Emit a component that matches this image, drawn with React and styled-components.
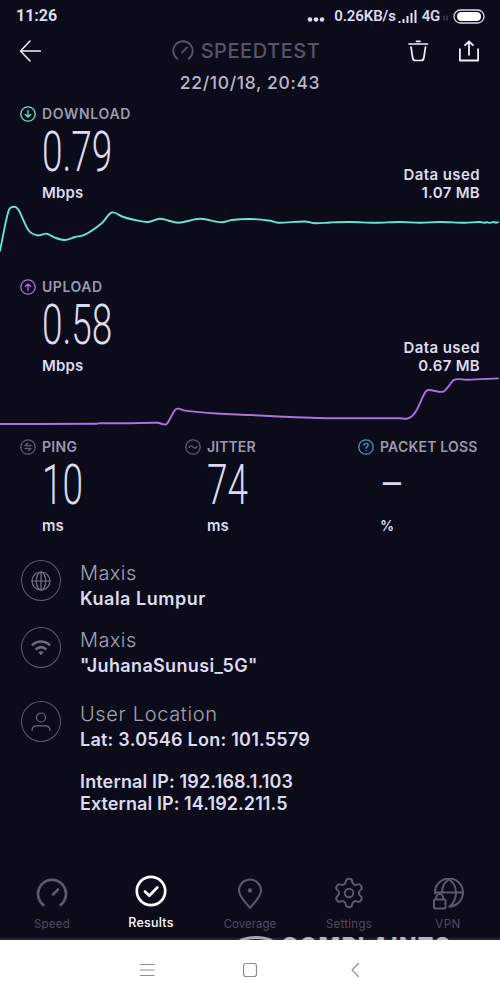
import React from "react";
import styled, { createGlobalStyle, css } from "styled-components";
import { Settings } from "lucide-react";

const INK = "#dddbf0";
const LABEL = "#9b9aab";
const DIM = "#4e4d5e";
const RING = "#5e5d6e";
const TEAL = "#6be3d3";
const VIOLET = "#a973e0";

const Global = createGlobalStyle`
  *, *::before, *::after { box-sizing: border-box; }
  body { margin: 0; background: #0c0b1a; }
`;

const Screen = styled.div`
  position: relative;
  display: flex;
  flex-direction: column;
  width: 500px;
  height: 1000px;
  overflow: hidden;
  background: #0c0b1a;
  color: ${INK};
  font-family: Inter, "Open Sans", sans-serif;
`;

const Text = styled.span`
  display: inline-block;
  white-space: pre;
  font-size: ${(p) => p.$size || 15}px;
  font-weight: ${(p) => p.$weight || 500};
  letter-spacing: ${(p) => p.$track || 0}px;
  line-height: ${(p) => p.$line || 18}px;
  color: ${(p) => p.$color || INK};
  ${(p) => p.$roboto && css`font-family: Roboto, sans-serif;`}
`;

const StatusBar = styled.div`
  display: flex;
  align-items: center;
  height: 32px;
  padding: 0 16px;
`;
const StatusRight = styled.div`
  display: flex;
  align-items: center;
  margin-left: auto;
`;
const Network = styled.div`
  display: flex;
  align-items: center;
  gap: ${(p) => p.$gap}px;
  margin-right: ${(p) => p.$after}px;
`;
const Header = styled.header`
  display: grid;
  grid-template-columns: 100px 1fr 100px;
  align-items: center;
  height: 38px;
  padding: 0 20px 0 19px;
`;
const Brand = styled.div`
  display: flex;
  align-items: center;
  justify-content: center;
  gap: 7px;
  padding-right: 7px;
`;
const Actions = styled.div`
  display: flex;
  justify-content: flex-end;
  gap: 29px;
`;
const DateRow = styled.div`
  height: 31px;
  padding-top: 3px;
  text-align: center;
`;
const Result = styled.section`
  display: flex;
  flex-direction: column;
  height: ${(p) => p.$height}px;
`;
const LabelRow = styled.div`
  display: flex;
  align-items: center;
  gap: 6px;
  height: 26px;
`;
const Reading = styled.div`
  display: flex;
  justify-content: space-between;
  align-items: flex-end;
  height: 75px;
  padding-right: 20px;
`;
const Measure = styled.div`
  display: flex;
  flex-direction: column;
  align-items: flex-start;
  height: 75px;
  padding-left: 22px;
`;
const Value = styled.span`
  display: inline-block;
  height: 57px;
  font-family: Roboto, sans-serif;
  font-weight: 300;
  font-size: 56px;
  line-height: 50px;
  white-space: pre;
  transform: scaleX(0.66);
  transform-origin: left;
`;
const Used = styled.div`
  display: flex;
  flex-direction: column;
  align-items: flex-end;
`;
const Padded = styled.div`
  padding-left: 20px;
`;
const Metrics = styled.section`
  display: grid;
  grid-template-columns: 165px 173px 1fr;
  height: 122px;
  padding-left: 20px;
`;
const InfoList = styled.section`
  display: flex;
  flex-direction: column;
  flex: 1;
  padding: 4px 20px 0 21px;
`;
const InfoRow = styled.div`
  display: flex;
  flex: none;
  gap: 19px;
  height: ${(p) => p.$height}px;
`;
const Ring = styled.div`
  display: flex;
  flex: none;
  align-items: center;
  justify-content: center;
  width: 40px;
  height: 41px;
  border: 1px solid ${RING};
  border-radius: 50%;
`;
const Lines = styled.div`
  display: flex;
  flex-direction: column;
  align-items: flex-start;
`;
const Detail = styled(Text)`
  margin-top: 2px;
`;
const Addresses = styled(Lines)`
  margin-top: 20px;
`;
const Tabs = styled.nav`
  display: flex;
  height: 72px;
  padding: 0 2.5px;
  border-bottom: 2px solid #24222f;
`;
const Tab = styled.div`
  display: flex;
  flex-direction: column;
  align-items: center;
  justify-content: space-between;
  width: 99px;
  height: 64px;
  padding-top: ${(p) => (p.$active ? 7 : 10)}px;
  padding-bottom: ${(p) => (p.$active ? 2 : 0)}px;
  color: ${(p) => (p.$active ? "#fff" : "#5b5a6b")};
`;
const SystemNav = styled.div`
  display: flex;
  align-items: center;
  height: 60px;
  padding-left: 139px;
  background: #fff;
`;
const NavKey = styled.div`
  display: flex;
  margin-right: ${(p) => p.$after || 0}px;
`;
const Watermark = styled.div`
  position: absolute;
  left: 234px;
  top: 935px;
  display: flex;
  align-items: flex-start;
  gap: 3px;
  width: 224px;
  height: 5px;
  overflow: hidden;
`;

const Svg = ({ w, h = w, color = "currentColor", sw = 1.5, cap = "round", children }) => (
  <svg width={w} height={h} viewBox={`0 0 ${w} ${h}`} fill="none" stroke={color} strokeWidth={sw}
    strokeLinecap={cap} strokeLinejoin="round" display="block">
    {children}
  </svg>
);

const smooth = (pts) => {
  let d = `M${pts[0][0]} ${pts[0][1]}`;
  for (let i = 0; i < pts.length - 1; i++) {
    const a = pts[i - 1] || pts[i], b = pts[i], c = pts[i + 1], e = pts[i + 2] || c;
    const t = (c[0] - b[0]) / 3;
    const s1 = (c[1] - a[1]) / (c[0] - a[0]);
    const s2 = (e[1] - b[1]) / (e[0] - b[0]);
    d += ` C${b[0] + t} ${b[1] + s1 * t} ${c[0] - t} ${c[1] - s2 * t} ${c[0]} ${c[1]}`;
  }
  return d;
};

const DOWN = [[0, 48.7], [8.3, 9.7], [13.3, 4.9], [18.3, 7.6], [28.3, 28], [37.3, 33.3], [46.7, 31.7], [55, 35.7], [65, 38], [75, 35], [85, 32.7], [101.7, 21.3], [111.7, 10.5], [123.3, 15], [135, 18], [148.3, 20], [160, 16.8], [178.3, 20.7], [200, 16.8], [221.7, 20.3], [231.7, 18], [250, 17], [270, 18.7], [278, 20.8], [305, 19.5], [315, 21.3], [330, 20.5], [350, 20], [375, 20.8], [400, 20], [420, 20.8], [440, 20], [465, 20.8], [480, 20], [484, 20.8], [487, 20.2], [490, 20.9], [494, 20], [496, 20.8], [498, 20.2]];
const UP = [[0, 49], [97, 48.7], [100, 48.2], [127, 48.3], [158, 47.8], [163, 49.2], [167, 48.6], [175, 35], [178.3, 33.6], [185, 35.6], [216.7, 38.5], [250, 40], [283, 41.7], [317, 43], [350, 43.3], [400, 43.3], [406.7, 43.7], [411.7, 41.5], [416.7, 35], [425, 17.5], [428.3, 15], [443, 16.8], [448, 12], [454, 4.8], [467, 4.7], [498, 3.4]];

const Badge = ({ color, children }) => (
  <Svg w={16} color={color} sw={1.3}><circle cx="8" cy="8" r="7.2" />{children}</Svg>
);

const Label = ({ icon, children, track }) => (
  <LabelRow>{icon}<Text $size={14} $weight={600} $color={LABEL} $track={track}>{children}</Text></LabelRow>
);

const SpeedResult = ({ icon, label, track, value, used, points, color, height }) => (
  <Result $height={height}>
    <Padded>
      <Label icon={icon} track={track}>{label}</Label>
      <Reading>
        <Measure><Value>{value}</Value><Text $weight={600} $track={0.15}>Mbps</Text></Measure>
        <Used><Text $weight={600} $track={0.4}>Data used</Text><Text $weight={600} $track={0.3}>{used}</Text></Used>
      </Reading>
    </Padded>
    <Svg w={500} h={height - 101} color={color} sw={1.9}><path d={smooth(points)} /></Svg>
  </Result>
);

const Metric = ({ icon, label, track, value, unit, size }) => (
  <div>
    <Label icon={icon} track={track}>{label}</Label>
    <Measure><Value>{value}</Value><Text $weight={600} $size={size}>{unit}</Text></Measure>
  </div>
);

const Info = ({ icon, height, title, titleTrack, detail, track, children }) => (
  <InfoRow $height={height}>
    <Ring>{icon}</Ring>
    <Lines>
      <Text $size={20} $weight={350} $line={26} $color="#a3a2b2" $track={titleTrack}>{title}</Text>
      <Detail $size={18} $weight={600} $line={22} $track={track}>{detail}</Detail>
      {children}
    </Lines>
  </InfoRow>
);

const GlobeIcon = () => (
  <Svg w={20} color="#747384" sw={1.2}>
    <circle cx="10" cy="10" r="9" /><ellipse cx="10" cy="10" rx="4.7" ry="9" /><path d="M10 1V19M1 10H19" />
  </Svg>
);
const WifiIcon = () => (
  <Svg w={20} h={18} color="#6d6c7d" sw={2.5} cap="butt">
    <path d="M1 6.300C6.300 1.300 13.700 1.300 19 6.300M4.700 10.500C8 7.500 12 7.500 15.300 10.500" />
    <path d="M7.300 13.300C9 12 11 12 12.700 13.300L10 16.200Z" fill="#6d6c7d" stroke="none" />
  </Svg>
);
const PersonIcon = () => (
  <Svg w={20} h={20} color="#6d6c7d" sw={1.2}>
    <circle cx="10" cy="5.500" r="4.500" /><path d="M1 18.500C1 15.500 3 13.800 6 13.800H14C17 13.800 19 15.500 19 18.500" />
  </Svg>
);

const TABS = [
  {
    name: "Speed", track: 0.25,
    icon: <Svg w={32} sw={2.7} cap="butt"><path d="M8.300 27.500A14 14 0 1 1 23.700 27.500" /><path d="M17 16.500L22 11.500" strokeLinecap="round" /></Svg>,
  },
  {
    name: "Results", track: 0.25, active: true,
    icon: <Svg w={32} sw={2.7}><circle cx="16" cy="16" r="14.200" /><path d="M10 16.500L14.300 20.700L22.300 12.500" /></Svg>,
  },
  {
    name: "Coverage", track: 0,
    icon: <Svg w={32} sw={2}><path d="M16 30C13 26 5 19 5 12.500A11 11 0 0 1 27 12.500C27 19 19 26 16 30Z" /><circle cx="16" cy="12.500" r="2.200" fill="currentColor" stroke="none" /></Svg>,
  },
  { name: "Settings", track: 0.25, icon: <Settings size={34} strokeWidth={1.4} style={{ marginTop: -2 }} /> },
  {
    name: "VPN", track: 0.6,
    icon: (
      <Svg w={32} sw={2}>
        <path d="M3 15.500A14 14 0 1 1 17.500 28.500M3 14.500H30.500" />
        <path d="M17 1.500C12.500 4 10 9.500 10 14.500M17 1.500C21.500 4 24 9.500 24 15C24 20 21.500 26 17.500 28.500" />
        <rect x="2" y="21.500" width="11.500" height="9" rx="1" /><path d="M4.300 21V19.500A3.400 3.400 0 0 1 11.100 19.500V21" />
      </Svg>
    ),
  },
];

export default function App() {
  return (
    <Screen>
      <Global />
      <StatusBar>
        <Text $roboto $size={16} $weight={700}>11:26</Text>
        <StatusRight>
          <Network $gap={9} $after={1}>
            <Svg w={18} h={12}><g fill={INK} stroke="none"><circle cx="3" cy="9.500" r="2.300" /><circle cx="9" cy="9.500" r="2.300" /><circle cx="15" cy="9.500" r="2.300" /></g></Svg>
            <Text $roboto $size={15} $weight={600} $track={-0.1}>0.26KB/s</Text>
          </Network>
          <Network $gap={5} $after={3}>
            <Svg w={20} h={13} color={INK} sw={2} cap="butt"><path d="M2.500 13V11M6.500 13V9M10.500 13V6M14.500 13V3M18.500 13V0" /></Svg>
            <Text $roboto $size={15} $weight={600} $track={-0.3}>4G</Text>
          </Network>
          <Network $gap={5} $after={-1}>
            <Svg w={5} h={9} color="#5b5a6b" sw={1}><path d="M1 4V8M4 4V8" /></Svg>
            <Svg w={32} h={15} color={INK} sw={1.300}><rect x="1" y="1" width="30" height="13" rx="6.500" /><rect x="4.500" y="3.500" width="23" height="8" rx="3.500" fill="#fff" stroke="#fff" strokeWidth="1" /></Svg>
          </Network>
        </StatusRight>
      </StatusBar>
      <Header>
        <Svg w={22} color="#f1f0fa"><path d="M21.500 11H1.500M11 1L1.500 11L11 21" /></Svg>
        <Brand>
          <Svg w={22} color="#565566" sw={1.800}><path d="M5.300 18.800A9.700 9.700 0 1 1 16.700 18.800M10 12.500L15 7.500" /></Svg>
          <Text $size={20} $color="#565566" $track={0.55}>SPEEDTEST</Text>
        </Brand>
        <Actions>
          <Svg w={22} color="#f1f0fa" sw={1.700}><path d="M2 4H20.500M9.500 1.300H13M4 7L5.700 18Q6.100 20.500 8.500 20.500H14Q16.400 20.500 16.800 18L18.500 7" /></Svg>
          <Svg w={22} color="#f1f0fa" sw={1.800} cap="butt"><path d="M1.900 8.500V20.500H20.100V8.500M11 15.500V2M6.500 5.700L11 1.500L15.500 5.700" /></Svg>
        </Actions>
      </Header>
      <DateRow><Text $size={17.500} $weight={550} $color="#b9b7ca" $track={0.65}>22/10/18, 20:43</Text></DateRow>
      <SpeedResult label="DOWNLOAD" track={0.7} value="0.79" used="1.07 MB" points={DOWN} color={TEAL} height={173}
        icon={<Badge color={TEAL}><path d="M8 4.500V11M5.300 8.500L8 11L10.700 8.500" /></Badge>} />
      <SpeedResult label="UPLOAD" track={0.55} value="0.58" used="0.67 MB" points={UP} color={VIOLET} height={160}
        icon={<Badge color={VIOLET}><path d="M8 11.500V5M5.300 7.500L8 5L10.700 7.500" /></Badge>} />
      <Metrics>
        <Metric label="PING" track={0.3} value="10" unit="ms"
          icon={<Badge color={RING}><path d="M11 6.500H5L7.500 4.300M5 9.500H11L8.500 11.700" /></Badge>} />
        <Metric label="JITTER" track={0.1} value="74" unit="ms"
          icon={<Badge color={RING}><path d="M4 8.600C5.300 6.300 6.700 6.500 8 8S10.700 9.700 12 7.400" /></Badge>} />
        <Metric label="PACKET LOSS" track={0.2} value="–" unit="%" size={14}
          icon={<Badge color="#3a9fd0"><path d="M6 6.200C6 3.600 10.200 3.700 10.200 6.200C10.200 7.600 8.100 7.700 8.100 9.300M8.100 11.600V11.700" /></Badge>} />
      </Metrics>
      <InfoList>
        <Info icon={<GlobeIcon />} height={67} title="Maxis" titleTrack={0.4} detail="Kuala Lumpur" track={0.5} />
        <Info icon={<WifiIcon />} height={74} title="Maxis" titleTrack={0.4} detail={'"JuhanaSunusi_5G"'} track={0.35} />
        <Info icon={<PersonIcon />} height={136} title="User Location" titleTrack={0.65} detail="Lat: 3.0546 Lon: 101.5579" track={0.24}>
          <Addresses>
            <Text $size={18} $weight={600} $line={22} $track={0.15}>Internal IP: 192.168.1.103</Text>
            <Text $size={18} $weight={600} $line={21} $track={0.08}>External IP: 14.192.211.5</Text>
          </Addresses>
        </Info>
      </InfoList>
      <Tabs>
        {TABS.map(({ name, icon, track, active }) => (
          <Tab key={name} $active={active}>
            {icon}
            <Text $size={active ? 12.5 : 11.5} $weight={active ? 500 : 400} $line={15} $track={track} $color={active ? "#fff" : DIM}>{name}</Text>
          </Tab>
        ))}
      </Tabs>
      <SystemNav>
        <NavKey $after={87}><Svg w={16} color="#8d8d8d" sw={1.200}><path d="M1.500 2.500H15M1.500 8H15M1.500 13.500H15" /></Svg></NavKey>
        <NavKey $after={92}><Svg w={16} color="#8d8d8d" sw={1.200}><rect x="1.500" y="1.500" width="13" height="13" rx="2.500" /></Svg></NavKey>
        <NavKey><Svg w={10} h={16} color="#8d8d8d" sw={1.100}><path d="M8.500 1.500L2 8L8.500 14.500" /></Svg></NavKey>
      </SystemNav>
      <Watermark>
        <Svg w={44} h={14} color="#a9a8b0" sw={3}><ellipse cx="22" cy="11" rx="20" ry="8.500" /></Svg>
        <Text $size={23} $weight={800} $line={22} $track={1.3} $color="#b5b4bb">COMPLAINTS</Text>
      </Watermark>
    </Screen>
  );
}
